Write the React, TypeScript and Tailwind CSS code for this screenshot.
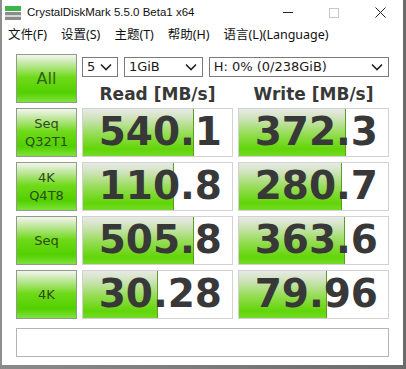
import React from "react";

const rows = [
  { label: ["Seq", "Q32T1"], read: "540.1", readFill: 111, write: "372.3", writeFill: 107 },
  { label: ["4K", "Q4T8"], read: "110.8", readFill: 91, write: "280.7", writeFill: 103 },
  { label: ["Seq"], read: "505.8", readFill: 111, write: "363.6", writeFill: 106 },
  { label: ["4K"], read: "30.28", readFill: 75, write: "79.96", writeFill: 88 },
];

const btn =
  "flex flex-col items-center justify-center border border-[#8f9c86] bg-[linear-gradient(to_bottom,#f3f5f0_0%,#c4e8a4_18%,#6fda18_48%,#52d000_80%,#7fe23c_100%)] text-[#2e4a1c] leading-[18px] text-[13px]";

function Chevron() {
  return (
    <svg width="12" height="8" viewBox="0 0 12 8" className="shrink-0">
      <path d="M1 1.5 L6 6.5 L11 1.5" fill="none" stroke="#222" strokeWidth="1.6" />
    </svg>
  );
}

function Select({ text, w }: { text: string; w: string }) {
  return (
    <div className={`${w} h-[20px] border border-[#7a7a7a] bg-white flex items-center justify-between pl-[4px] pr-[5px] text-[13px] text-[#1a1a1a]`}>
      <span>{text}</span>
      <Chevron />
    </div>
  );
}

function Cell({ value, fill }: { value: string; fill: number }) {
  return (
    <div className="relative h-[49px] border border-[#d2d2d2] bg-white">
      <div
        className="absolute left-0 top-0 bottom-0 border-r border-[#5a9e20] bg-[linear-gradient(to_bottom,#e8eae6_0%,#cfe3bb_20%,#92dc4e_55%,#62d508_85%,#74db26_100%)]"
        style={{ width: fill }}
      />
      <div className="relative h-full flex items-center justify-end pr-[10px] font-['DejaVu_Sans',sans-serif] font-bold text-[39px] text-[#383838]">
        {value}
      </div>
    </div>
  );
}

export default function App() {
  return (
    <div className="w-[406px] h-[369px] bg-[linear-gradient(to_right,#8a8a8a,#6b6b6b)] overflow-hidden font-['DejaVu_Sans',sans-serif]">
      <div className="w-[403px] h-[365px] bg-white border-l-2 border-[#8e8e8e] flex flex-col">
        {/* title bar */}
        <div className="h-[25px] flex items-center shrink-0">
          <svg width="16" height="14" viewBox="0 0 16 14" className="ml-[3px]">
            <rect x="0" y="0" width="16" height="5" fill="#3cb54a" />
            <rect x="0" y="6" width="16" height="8" fill="#8c8c8c" />
            <rect x="0" y="9" width="16" height="2" fill="#d8d8d8" />
          </svg>
          <span className="ml-[6px] text-[11.5px] text-[#111] font-['Liberation_Sans',sans-serif]">
            CrystalDiskMark 5.5.0 Beta1 x64
          </span>
          <div className="ml-auto flex items-center h-full">
            <div className="w-[46px] h-full flex items-center justify-center">
              <div className="w-[10px] h-px bg-[#222]" />
            </div>
            <div className="w-[46px] h-full flex items-center justify-center">
              <div className="w-[10px] h-[10px] border border-[#c8c8c8]" />
            </div>
            <div className="w-[46px] h-full flex items-center justify-center">
              <svg width="11" height="11" viewBox="0 0 11 11">
                <path d="M0.5 0.5 L10.5 10.5 M10.5 0.5 L0.5 10.5" stroke="#222" strokeWidth="1" />
              </svg>
            </div>
          </div>
        </div>
        {/* menu bar */}
        <div className="h-[20px] flex items-center gap-[14px] pl-[6px] text-[12.5px] text-[#111] font-['Noto_Sans','Noto_Sans_CJK_SC',sans-serif] shrink-0">
          <span>文件(F)</span>
          <span>设置(S)</span>
          <span>主题(T)</span>
          <span>帮助(H)</span>
          <span>语言(L)(Language)</span>
        </div>
        {/* body */}
        <div className="pl-[14px] pt-[9px] flex flex-col">
          <div className="grid grid-cols-[61px_151px_151px] gap-x-[5px] gap-y-[5px] auto-rows-[49px]">
            <div className={`${btn} text-[16px] text-[#33601a]`}>All</div>
            <div className="col-span-2 flex flex-col">
              <div className="flex gap-[6px] mt-[3px]">
                <Select text="5" w="w-[36px]" />
                <Select text="1GiB" w="w-[79px]" />
                <Select text="H: 0% (0/238GiB)" w="w-[181px]" />
              </div>
              <div className="flex mt-[5px] font-bold text-[17px] text-[#383838]">
                <div className="w-[151px] text-center">Read [MB/s]</div>
                <div className="w-[5px]" />
                <div className="w-[151px] text-center">Write [MB/s]</div>
              </div>
            </div>
            {rows.map((r, i) => (
              <React.Fragment key={i}>
                <div className={btn}>
                  {r.label.map((l) => (
                    <span key={l}>{l}</span>
                  ))}
                </div>
                <Cell value={r.read} fill={r.readFill} />
                <Cell value={r.write} fill={r.writeFill} />
              </React.Fragment>
            ))}
          </div>
          <div className="mt-[9px] w-[373px] h-[29px] border border-[#b4b4b4] bg-white" />
        </div>
      </div>
    </div>
  );
}
